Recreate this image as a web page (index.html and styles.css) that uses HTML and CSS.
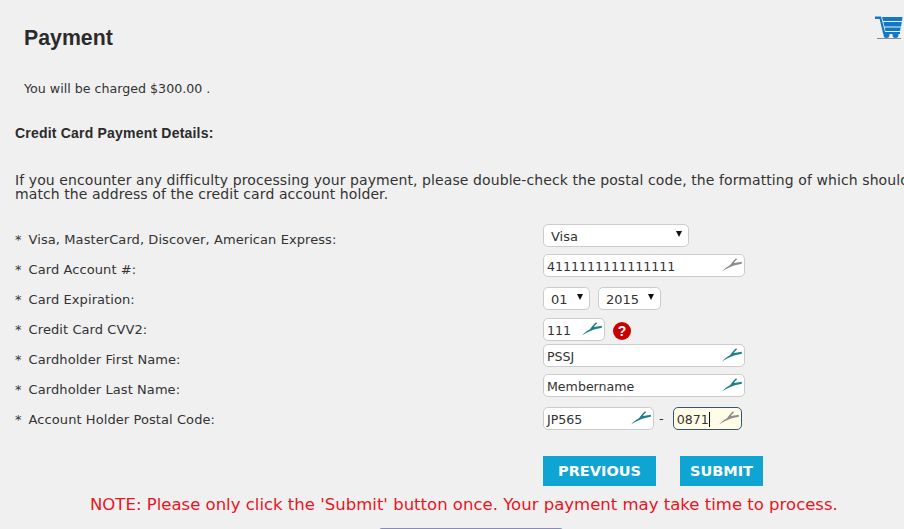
FILE: index.html
```html
<!DOCTYPE html>
<html lang="en">
  <head>
    <meta charset="UTF-8" />
    <meta name="viewport" content="width=device-width, initial-scale=1.0" />
    <title>Payment</title>
    <link rel="stylesheet" href="styles.css">
  </head>
  <body>
    <svg width="0" height="0" class="defs">
      <symbol id="runner" viewBox="0 0 20 14">
        <path d="M0 13.5 C2 11 5 8.8 8 7.2 C9.5 5 11.5 2.5 14 0.3 L15.2 1.2 C13.5 2.6 12.5 3.6 12 4.9 L19.8 3.8 V5.8 L12 7.6 C8 9 4.5 11 0 13.5 Z" />
      </symbol>
    </svg>

    <div class="wrapper">
      <div class="top">
        <h1>Payment</h1>
        <svg class="cart" viewBox="0 0 28 24">
          <path class="cart-fill" d="M0 1.5 H6 L10 17 H25 V19 H8.2 L4.6 4 H0 Z" />
          <path class="cart-fill" d="M7 2 H27.5 L27 6 H8 Z" />
          <path class="cart-fill" d="M8.3 7 H26.8 L26 11.5 H9.4 Z" />
          <path class="cart-fill" d="M9.7 12.5 H25.8 L25 16 H10.4 Z" />
          <circle class="cart-fill" cx="11.5" cy="20" r="3" />
          <circle class="cart-fill" cx="20.5" cy="20" r="3" />
          <path class="cart-shadow" d="M2 23.5 H26" />
        </svg>
      </div>

      <p class="charged">You will be charged $300.00 .</p>
      <h2>Credit Card Payment Details:</h2>
      <p class="intro">
        If you encounter any difficulty processing your payment, please double-check the postal code, the formatting of which should<br />
        match the address of the credit card account holder.
      </p>

      <form class="fields" action="">
        <label><span class="star">*</span>Visa, MasterCard, Discover, American Express:</label>
        <div class="field">
          <div class="select select-card">Visa<span class="arrow"></span></div>
        </div>

        <label><span class="star">*</span>Card Account #:</label>
        <div class="field">
          <div class="input input-long">4111111111111111<svg class="runner grey"><use href="#runner" /></svg></div>
        </div>

        <label><span class="star">*</span>Card Expiration:</label>
        <div class="field field-low">
          <div class="select select-month">01<span class="arrow"></span></div>
          <div class="select select-year">2015<span class="arrow"></span></div>
        </div>

        <label><span class="star">*</span>Credit Card CVV2:</label>
        <div class="field field-cvv">
          <div class="input input-cvv">111<svg class="runner"><use href="#runner" /></svg></div>
          <span class="help">?</span>
        </div>

        <label><span class="star">*</span>Cardholder First Name:</label>
        <div class="field">
          <div class="input input-long">PSSJ<svg class="runner"><use href="#runner" /></svg></div>
        </div>

        <label><span class="star">*</span>Cardholder Last Name:</label>
        <div class="field">
          <div class="input input-long">Membername<svg class="runner"><use href="#runner" /></svg></div>
        </div>

        <label><span class="star">*</span>Account Holder Postal Code:</label>
        <div class="field field-low">
          <div class="input input-zip">JP565<svg class="runner"><use href="#runner" /></svg></div>
          <span class="dash">-</span>
          <div class="input input-zip4 focused">0871<span class="caret"></span><svg class="runner grey"><use href="#runner" /></svg></div>
        </div>
      </form>

      <div class="buttons">
        <button type="button" class="btn btn-prev">PREVIOUS</button>
        <button type="button" class="btn btn-submit">SUBMIT</button>
      </div>

      <p class="note">NOTE: Please only click the 'Submit' button once. Your payment may take time to process.</p>
      <div class="bottom-box"></div>
    </div>
  </body>
</html>
```

FILE: styles.css
```css
* {
  margin: 0;
  padding: 0;
  box-sizing: border-box;
}
html,
body {
  height: 100%;
  overflow: hidden;
}
body {
  background-color: #f0f0f0;
  color: #333;
  font-family: "DejaVu Sans", Verdana, sans-serif;
  font-size: 13px;
}

.defs {
  position: absolute;
}

.wrapper {
  width: 904px;
  padding-top: 14px;
}

.top {
  display: flex;
  justify-content: space-between;
  padding-left: 24px;
  height: 48px;
}

.top h1 {
  font-family: "Liberation Sans", Arial, sans-serif;
  font-size: 21.3px;
  line-height: 48px;
  height: 48px;
  color: #2b2b2b;
}

.cart {
  width: 28px;
  height: 24px;
  margin: 1px 1px 0 0;
}
.cart-fill {
  fill: #1178c4;
}
.cart-shadow {
  stroke: #8a8a8a;
  stroke-width: 1;
  fill: none;
}

.charged {
  padding: 19px 0 0 24px;
  line-height: 16px;
  font-size: 12.65px;
}

h2 {
  font-family: "Liberation Sans", Arial, sans-serif;
  font-size: 14px;
  letter-spacing: 0.2px;
  line-height: 16px;
  padding: 28px 0 0 15px;
  color: #2b2b2b;
}

.intro {
  padding: 32px 0 0 15px;
  line-height: 14px;
  white-space: nowrap;
  font-size: 14px;
  letter-spacing: 0.09px;
}

.fields {
  display: grid;
  grid-template-columns: 528px 1fr;
  grid-auto-rows: 30px;
  padding: 22px 0 0 15px;
}

.fields label {
  display: flex;
  align-items: center;
  padding-top: 2px;
  letter-spacing: 0.08px;
}

.star {
  margin-right: 7px;
}

/* the controls sit a little above their label, except the lower rows */
.field {
  display: flex;
  align-items: center;
  padding-bottom: 5px;
}
.field-low {
  padding-bottom: 0;
  padding-top: 1px;
}
.field-cvv {
  padding-bottom: 0;
  padding-top: 3px;
}

.select,
.input {
  display: flex;
  align-items: center;
  height: 23px;
  padding-top: 1px;
  background: #fff;
  border: 1px solid #ccc;
  border-radius: 5px;
  position: relative;
}

.select {
  padding-left: 7px;
}

.select-card {
  width: 146px;
}
.select-month {
  width: 47px;
}
.select-year {
  width: 63px;
  margin-left: 8px;
}

.arrow {
  position: absolute;
  right: 6px;
  top: 6px;
  border-left: 3.5px solid transparent;
  border-right: 3.5px solid transparent;
  border-top: 6px solid #111;
}

.input {
  padding-left: 3px;
  font-size: 12.6px;
}

.input-long {
  width: 202px;
}
.input-cvv {
  width: 62px;
}
.input-zip {
  width: 111px;
}
.input-zip4 {
  width: 69px;
}

.focused {
  background: #fffde8;
  border-color: #35586e;
}

.caret {
  width: 1px;
  height: 15px;
  background: #111;
}

.runner {
  position: absolute;
  right: 2px;
  top: 3px;
  width: 20px;
  height: 14px;
  fill: #1d7f8c;
}
.runner.grey {
  fill: #8d8d8d;
}

.help {
  width: 18px;
  height: 18px;
  margin: 3px 0 0 8px;
  border-radius: 50%;
  background: #c80000;
  color: #fff;
  font-family: "Liberation Sans", Arial, sans-serif;
  font-weight: bold;
  font-size: 14px;
  line-height: 18px;
  text-align: center;
}

.dash {
  margin: 0 9px 0 5px;
}

.buttons {
  display: flex;
  gap: 24px;
  padding: 23px 0 0 543px;
}

.btn {
  height: 30px;
  border: none;
  background: #0fa5d3;
  color: #fff;
  font-family: "DejaVu Sans", Verdana, sans-serif;
  font-weight: bold;
  font-size: 14.5px;
}
.btn-prev {
  width: 113px;
}
.btn-submit {
  width: 83px;
}

.note {
  color: #e8141e;
  font-size: 16.52px;
  line-height: 20px;
  white-space: nowrap;
  padding: 9px 0 0 90px;
}

.bottom-box {
  width: 184px;
  height: 10px;
  margin: 13px 0 0 379px;
  border-top: 1px solid #8a8ab8;
  border-radius: 3px 3px 0 0;
}
```
